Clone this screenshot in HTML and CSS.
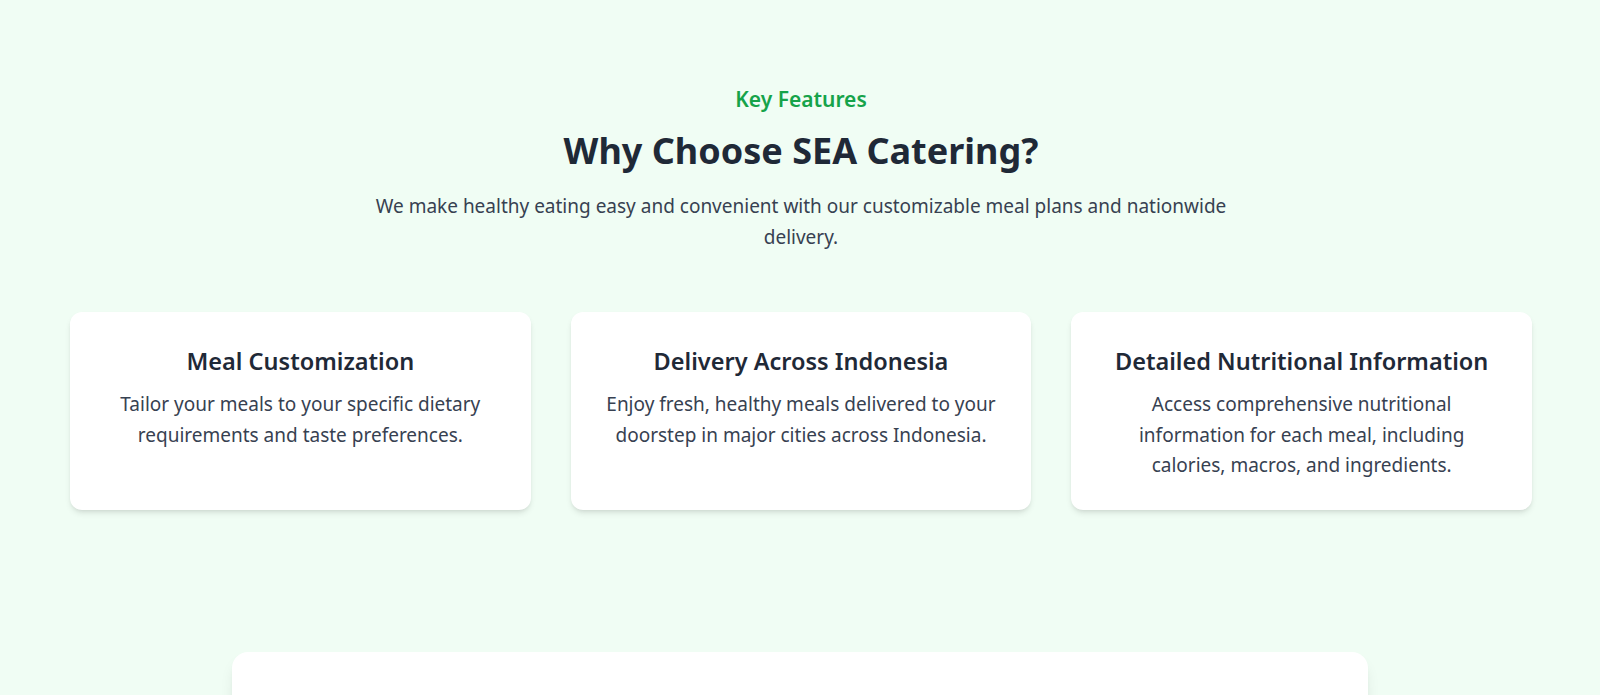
FILE: index.html
```html
<!DOCTYPE html>
<html lang="en">
<head>
<meta charset="utf-8">
<title>SEA Catering - Key Features</title>
<link rel="stylesheet" href="styles.css">
</head>
<body>
<section class="features">
  <header class="features-head">
    <p class="eyebrow">Key Features</p>
    <h2 class="title">Why Choose SEA Catering?</h2>
    <p class="lead">We make healthy eating easy and convenient with our customizable meal plans and nationwide delivery.</p>
  </header>
  <div class="cards">
    <article class="card">
      <h3 class="card-title">Meal Customization</h3>
      <p class="card-text">Tailor your meals to your specific dietary requirements and taste preferences.</p>
    </article>
    <article class="card">
      <h3 class="card-title">Delivery Across Indonesia</h3>
      <p class="card-text">Enjoy fresh, healthy meals delivered to your doorstep in major cities across Indonesia.</p>
    </article>
    <article class="card">
      <h3 class="card-title">Detailed Nutritional Information</h3>
      <p class="card-text">Access comprehensive nutritional information for each meal, including calories, macros, and ingredients.</p>
    </article>
  </div>
</section>
<section class="next">
  <div class="next-card"></div>
</section>
</body>
</html>
```

FILE: styles.css
```css
* { box-sizing: border-box; }
html, body { margin: 0; padding: 0; }
body {
  background: #f0fdf4;
  font-family: "Noto Sans", "Open Sans", "DejaVu Sans", sans-serif;
  color: #1f2937;
  overflow: hidden;
  height: 695px;
}
.features {
  padding: 85px 68px 0 70px;
}
.features-head {
  text-align: center;
  margin-bottom: 59px;
}
.eyebrow {
  margin: 0;
  font-size: 21px;
  line-height: 28px;
  font-weight: 600;
  color: #16a34a;
}
.title {
  margin: 18px 0 0;
  font-size: 36px;
  line-height: 40px;
  font-weight: 700;
  color: #1f2937;
}
.lead {
  margin: 20px auto 0;
  max-width: 896px;
  font-size: 19px;
  line-height: 31px;
  color: #374151;
}
.cards {
  display: grid;
  grid-template-columns: repeat(3, 1fr);
  gap: 40px;
}
.card {
  background: #fff;
  border-radius: 12px;
  padding: 32px 32px 29px;
  text-align: center;
  box-shadow: 0 4px 6px -1px rgba(0,0,0,.1), 0 2px 4px -2px rgba(0,0,0,.1);
}
.card-title {
  margin: 0;
  font-size: 23.5px;
  line-height: 34px;
  font-weight: 600;
  color: #1f2937;
}
.card-text {
  margin: 11px 0 0;
  font-size: 19px;
  line-height: 30.6px;
  color: #374151;
}
.next {
  padding-top: 142px;
}
.next-card {
  width: 1136px;
  height: 200px;
  margin: 0 auto;
  background: #fff;
  border-radius: 16px;
  box-shadow: 0 10px 15px -3px rgba(0,0,0,.1), 0 4px 6px -4px rgba(0,0,0,.1);
}
```
